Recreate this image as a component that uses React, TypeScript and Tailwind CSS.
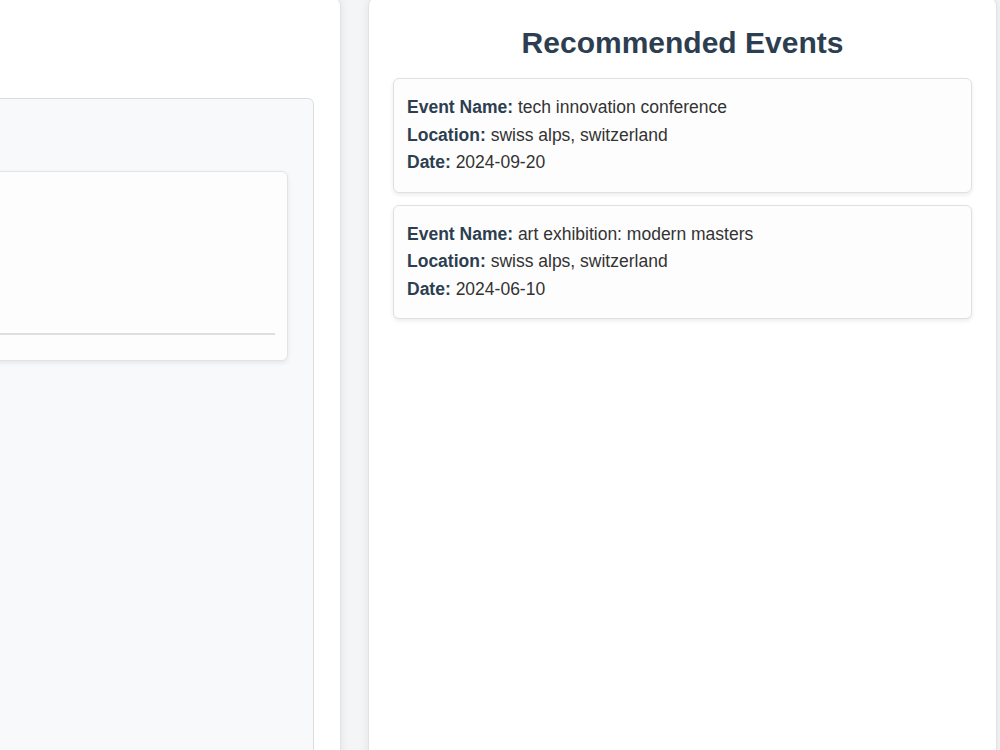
import React from "react";

const events = [
  { name: "tech innovation conference", location: "swiss alps, switzerland", date: "2024-09-20" },
  { name: "art exhibition: modern masters", location: "swiss alps, switzerland", date: "2024-06-10" },
];

export default function App() {
  return (
    <div
      className="h-[750px] overflow-hidden bg-[#f4f5f7] flex items-start gap-[27px]"
      style={{ fontFamily: '"Liberation Sans", Arial, sans-serif' }}
    >
      <div className="shrink-0 w-[629px] ml-[-288px] mt-[-4px] h-[820px] bg-white rounded-[10px] border border-[#e2e3e5] shadow-[0_0_10px_rgba(0,0,0,0.08)] px-[26px] pt-[101px]">
        <div className="h-[700px] bg-[#f8f9fa] border border-[#dcdde0] rounded-[6px] pt-[72px] px-[25px]">
          <div className="h-[190px] bg-[#fdfdfd] border border-[#e3e4e6] rounded-[6px] shadow-[0_2px_5px_rgba(0,0,0,0.08)] flex flex-col justify-end pb-[25px] px-[12px]">
            <div className="h-[2px] bg-[#dedede]" />
          </div>
        </div>
      </div>

      <div className="shrink-0 w-[629px] mt-[-4px] h-[820px] bg-white rounded-[10px] border border-[#e2e3e5] shadow-[0_0_10px_rgba(0,0,0,0.08)] px-[24px] pt-[29px]">
        <h2 className="text-center text-[30px] leading-[34px] font-bold text-[#2c3e50] mb-[18px]">
          Recommended Events
        </h2>
        <div className="flex flex-col gap-[12px]">
          {events.map((e) => (
            <div
              key={e.name}
              className="bg-[#fdfdfd] border border-[#dfe0e2] rounded-[6px] shadow-[0_2px_4px_rgba(0,0,0,0.08)] px-[13px] pt-[15px] pb-[15px] text-[17.5px] leading-[27.5px] text-[#333333]"
            >
              <div>
                <span className="font-bold text-[#2c3e50]">Event Name:</span> {e.name}
              </div>
              <div>
                <span className="font-bold text-[#2c3e50]">Location:</span> {e.location}
              </div>
              <div>
                <span className="font-bold text-[#2c3e50]">Date:</span> {e.date}
              </div>
            </div>
          ))}
        </div>
      </div>
    </div>
  );
}
